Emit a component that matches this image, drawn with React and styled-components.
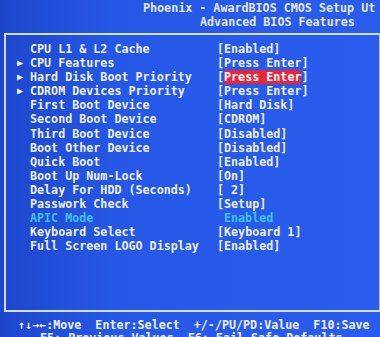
import React from 'react';
import styled, { createGlobalStyle } from 'styled-components';

const GlobalStyle = createGlobalStyle`
  * {
    margin: 0;
    padding: 0;
    box-sizing: border-box;
  }

  body {
    background-color: #2455e2;
    font-family: "DejaVu Sans Mono", "Liberation Mono", monospace;
  }
`;

const Screen = styled.div`
  width: 380px;
  height: 337px;
  overflow: hidden;
  background: linear-gradient(90deg, #1d46cc 0%, #2558e6 30%, #2a5ded 100%);
  color: #eef0f8;
  font-weight: bold;
  font-size: 11.7px;
  display: flex;
  flex-direction: column;
`;

const Header = styled.header`
  height: 33px;
  flex-shrink: 0;
  padding-top: 1px;
  display: flex;
  flex-direction: column;
  white-space: nowrap;
`;

const TitleLine = styled.div`
  padding-left: ${(p) => p.$indent}px;
  line-height: 14px;
  color: #e4e8f4;
`;

const Panel = styled.main`
  height: 279px;
  flex-shrink: 0;
  margin-left: 4px;
  border-top: 2px solid #d6def2;
  border-left: 2px solid #cfd8ee;
  border-bottom: 2px solid #d6def2;
  border-right: 1px solid #b8c6ea;
  padding: 7px 0 0 11px;
`;

const Row = styled.div`
  display: grid;
  grid-template-columns: 13px 187px auto;
  height: 14.1px;
  line-height: 14.1px;
  white-space: nowrap;
  color: ${(p) => (p.$muted ? '#3fc2f4' : '#eef0f8')};
`;

const Arrow = styled.span`
  font-size: 10px;
`;

const Value = styled.span`
  padding-left: ${(p) => (p.$bare ? 7 : 0)}px;
`;

const Highlight = styled.span`
  background: #e6263c;
  color: #ffffff;
`;

const Footer = styled.footer`
  flex-shrink: 0;
  padding: 7px 0 0 18px;
  line-height: 13px;
  white-space: nowrap;
`;

const Keys = styled.div`
  display: flex;
  gap: ${(p) => p.$gap}px;
  padding-left: ${(p) => p.$indent || 0}px;
`;

const items = [
  { label: 'CPU L1 & L2 Cache', value: '[Enabled]' },
  { label: 'CPU Features', value: '[Press Enter]', sub: true },
  { label: 'Hard Disk Boot Priority', value: 'Press Enter', sub: true, active: true },
  { label: 'CDROM Devices Priority', value: '[Press Enter]', sub: true },
  { label: 'First Boot Device', value: '[Hard Disk]' },
  { label: 'Second Boot Device', value: '[CDROM]' },
  { label: 'Third Boot Device', value: '[Disabled]' },
  { label: 'Boot Other Device', value: '[Disabled]' },
  { label: 'Quick Boot', value: '[Enabled]' },
  { label: 'Boot Up Num-Lock', value: '[On]' },
  { label: 'Delay For HDD (Seconds)', value: '[ 2]' },
  { label: 'Passwork Check', value: '[Setup]' },
  { label: 'APIC Mode', value: 'Enabled', muted: true },
  { label: 'Keyboard Select', value: '[Keyboard 1]' },
  { label: 'Full Screen LOGO Display', value: '[Enabled]' },
];

const App = () => {
  return (
    <Screen>
      <GlobalStyle />
      <Header>
        <TitleLine $indent={143}>Phoenix - AwardBIOS CMOS Setup Ut</TitleLine>
        <TitleLine $indent={200}>Advanced BIOS Features</TitleLine>
      </Header>

      <Panel>
        {items.map((item) => (
          <Row key={item.label} $muted={item.muted}>
            <Arrow>{item.sub ? '▶' : ''}</Arrow>
            <span>{item.label}</span>
            {item.active ? (
              <Value>
                [<Highlight>{item.value}</Highlight>]
              </Value>
            ) : (
              <Value $bare={item.muted}>{item.value}</Value>
            )}
          </Row>
        ))}
      </Panel>

      <Footer>
        <Keys $gap={14}>
          <span>↑↓→←:Move</span>
          <span>Enter:Select</span>
          <span>+/-/PU/PD:Value</span>
          <span>F10:Save</span>
        </Keys>
        <Keys $gap={14} $indent={22}>
          <span>F5: Previous Values</span>
          <span>F6: Fail-Safe Defaults</span>
        </Keys>
      </Footer>
    </Screen>
  );
};

export default App;
